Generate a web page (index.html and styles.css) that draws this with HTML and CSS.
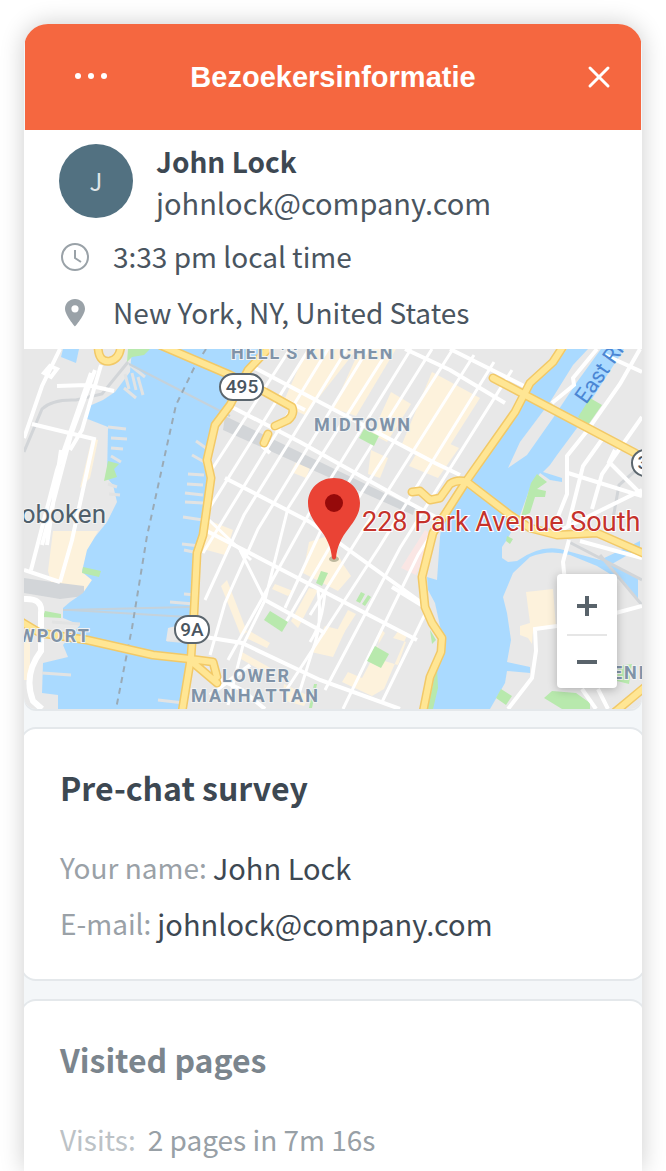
FILE: index.html
```html
<!DOCTYPE html>
<html lang="nl">
  <head>
    <meta charset="utf-8">
    <meta name="viewport" content="width=device-width, initial-scale=1">
    <title>Bezoekersinformatie</title>
    <link rel="stylesheet" href="styles.css">
  </head>
  <body>
    <main class="panel">
      <header class="header">
        <button class="header-button" aria-label="Menu">
          <svg width="36" height="36" viewBox="0 0 36 36" fill="#fff">
            <circle cx="5" cy="17" r="3" /><circle cx="18" cy="17" r="3" /><circle cx="31" cy="17" r="3" />
          </svg>
        </button>
        <h1>Bezoekersinformatie</h1>
        <button class="header-button" aria-label="Sluiten">
          <svg width="36" height="36" viewBox="0 0 36 36" stroke="#fff" stroke-width="3" stroke-linecap="round">
            <path d="M9 9L27 27M27 9L9 27" />
          </svg>
        </button>
      </header>

      <section class="visitor">
        <div class="person">
          <span class="avatar">J</span>
          <div>
            <h2>John Lock</h2>
            <p>johnlock@company.com</p>
          </div>
        </div>
        <p class="detail">
          <svg width="32" height="32" viewBox="0 0 32 32" fill="none" stroke="#9aa2a8" stroke-width="2">
            <circle cx="16" cy="17" r="13" /><path d="M16 10v8l6 4" />
          </svg>
          3:33 pm local time
        </p>
        <p class="detail">
          <svg width="32" height="32" viewBox="0 0 32 32" fill="#9aa2a8">
            <path fill-rule="evenodd" d="M16 3C10.400 3 6 7.300 6 12.800C6 19.500 16 30.500 16 30.500S26 19.500 26 12.800C26 7.300 21.600 3 16 3zM16 9.200a3.600 3.600 0 1 1 0 7.200a3.600 3.600 0 0 1 0-7.200z" />
          </svg>
          New York, NY, United States
        </p>
      </section>

      <section class="map">
        <svg class="map-canvas" viewBox="24 349 618 360" preserveAspectRatio="xMidYMid slice">
          <defs>
            <clipPath id="manhattan">
              <path d="M262 349H562L530 383L467 478L437 530L422 577L432 623L442 640L430 677L423 709H182L194 613L203 535L211 478L207 460L215 425L232 402z" />
            </clipPath>
          </defs>
          <rect x="24" y="349" width="618" height="360" fill="#e8e8e8" />

          <!-- New Jersey side -->
          <g fill="#fdf2dc">
            <path d="M92 438l6 2l-8 38l-10 10z" />
            <path d="M53 531h45l-11 20l-5 20l10 9l-10 14l-30-8l-4-15z" />
            <path d="M24 640h6v40h-6z" />
          </g>
          <path d="M24 578l28 4l32 4v10l-24 3l-36-6z" fill="#d2d5d8" />
          <path d="M24 452l18-43q10-10 34-9l26-6l26-32" fill="none" stroke="#d2d5d8" stroke-width="3" />

          <!-- Hudson -->
          <g fill="#aadaff">
            <path d="M63 349H79L76 363L61 357z" />
            <path d="M132 349H270L240 375L228 402L215 425L203 462L207 478L202 535L197 550L190 630L180 709H58V695L42 693L43 663L68 657L63 645L80 625L63 618V608L70 602L83 593L92 580L82 572L87 550L95 537L107 522L117 502L113 485L107 478L108 427L85 418L87 407L103 400L115 392L130 372z" />
          </g>
          <g fill="#b8e9ad">
            <path d="M128 349h22l-6 6l-12 2l-5 5z" />
            <path d="M108 461l11 3l-5 5l3 8l-13 4z" />
            <path d="M83 567l18 4l-2 6l-17-4z" />
            <path d="M45 611l16 3v4l-18-1z" />
          </g>
          <path d="M108 427l18 2M111 438l16 1M111 448l12 1M111 456l10 6M108 484l9 3M109 494l11 1M130 365l15 12M125 374l4 15M132 373l4 17M138 377l5 18M124 388l12 10M196 441l10 7M192 455l14 8M188 474l16 1M187 484l16 1M185 493l18 2M185 502l18 1M183 517l20 3M182 544l18 2M184 550l14 3M184 594l13 1M170 602l24 2M167 640l23 2M158 700l26 3M42 673l29 2M52 622l28 2" stroke="#e2e3e3" stroke-width="3" fill="none" />
          <path d="M168 628l20-5v16l-22 2z" fill="#e8e8e8" />
          <path d="M129 364L230 416M63 610L190 607M70 610L188 617" stroke="#c5d2db" stroke-width="2" fill="none" />
          <path d="M206 349L194 368L176 405L166 450L147 536L132 628L116 709" fill="none" stroke="#9aaab6" stroke-width="2" stroke-dasharray="6 5" />

          <!-- New Jersey streets -->
          <g fill="none" stroke="#fff" stroke-width="4">
            <path d="M60 349L42 386L24 438M95 370L71 435L42 545M91 373L57 470L31 570M101 365L82 430L70 450M32 424L94 439L72 540L60 582M61 450L47 545M57 386l30-1l27 6M50 366l7 3l-6 8l-7-4zM24 570l36 12" />
            <path d="M24 599q19-1 17 14v38q-18 24-8 50l9 8" stroke-width="6" />
          </g>

          <!-- Manhattan -->
          <g clip-path="url(#manhattan)">
            <g fill="#fdf2dc">
              <path d="M307 349h50l-52 66l-23-10z" />
              <path d="M360 349h36l-40 67l-23-8z" />
              <path d="M391 392l20 12l-24 38l-15-8z" />
              <path d="M432 372l48 26l-42 66l-36-20z" />
              <path d="M428 434l31 14l-21 30l-29-12z" />
              <path d="M371 450l17 8l-8 20l-12-4z" />
              <path d="M296 462l14 6l-4 10l-15-6z" />
              <path d="M208 520l25 10l-8 25l-22-6z" />
              <path d="M309 542l19-6l15 28l8 12l-13 15l-35-18z" />
              <path d="M275 584l18 7l-5 5l-16-7z" />
              <path d="M309 588l-18 33l7 7l20-38z" />
              <path d="M325 626l20 5l-12 26l-22-5z" />
              <path d="M380 628l5 5l-14 24l27 8l8-23l-13-4l6-8l9 3l-24 56l-12 7l-30-14l6-10l14 6l16-30z" />
              <path d="M348 610l8 4l-18 28l-5-4z" />
              <path d="M227 580l20 52l-6 4l-20-50zM248 630l22 13l-3 5l-21-10zM242 652l32 18l-3 6l-30-17z" />
              <path d="M284 684l25 12l-5 10l-22-6z" />
            </g>
            <path d="M425 530l9 5l-18 40l-15-7z" fill="#fae6e4" />
            <path d="M225 416l190 92l-2 7l-190-85z" fill="#d2d5d8" />
            <g fill="#b8e9ad">
              <path d="M321 571l7 2l-6 13l-6-3z" />
              <path d="M361 592l4 2l-5 9l-4-2zM368 595l3 2l-6 9l-3-2z" />
              <path d="M314 684h3l-5 24h-3z" />
            </g>
            <g fill="none" stroke="#fff" stroke-width="3">
              <path d="M290 349L205 480M309 349L197 528M328 349L203 553M347 349L244 515L205 600M368 349L258 529L225 603L210 655M389 349L288 508L265 600M411 349L310 512L228 660M432 349L328 515L285 608M453 349L362 492L286 622M474 355L360 535L310 615M494 362L380 546L283 695M512 370L400 548L325 690M467 478L418 555L343 709M432 600L382 702" />
              <path d="M318 590q5 35-6 62l-14 45M325 590q-2 32-15 52M240 550l25 50l-22 45l-15 60M209 520l42 40" />
            </g>
            <g fill="none" stroke="#fff" stroke-width="4">
              <path d="M255 368L350 418L435 463L460 475M228 405L300 442L400 498L445 522M225 478L310 522L422 603M195 525L265 561L417 640M265 600L325 633M205 637L242 643L320 680L400 709M405 349L450 370L505 403M450 349L528 388M265 390L305 410M392 587L423 606" />
              <path d="M200 670L242 690L265 709M210 695l40-30M262 446l8 7" />
            </g>
            <g fill="#b8e9ad">
              <path d="M364 429l15 7l-5 10l-15-8z" />
              <path d="M270 611l18 11l-6 10l-18-12z" />
              <path d="M375 646l14 8l-8 14l-14-7z" />
            </g>
          </g>

          <!-- East River -->
          <path fill="#aadaff" d="M567 349L557 362L530 382L507 418L467 482L443 515L440 537L437 580L427 577L428 590L435 603L443 640L433 673L432 709H490L505 683L507 671L530 673V667L507 662L511 640L507 613L503 597L513 573L530 557Q549 549 570 555L597 566L625 583L638 600V578L612 564L640 548V541L600 560L560 549Q539 545 517 561L508 562L502 558V547L508 538L520 515L530 488L540 473L550 480L562 482V478L543 472L550 465L557 455L577 428L590 402L624 349z" />
          <path fill="#e8e8e8" d="M508 468L520 442L550 402L573 365L588 349H601L577 382L553 418L527 455z" />
          <g fill="#b8e9ad">
            <path d="M590 398l12 7l-14 20l-10-8z" />
            <path d="M537 474l10 8l-10 7l9 2l-1 6l-10 0l-5 16l-9 4l10-34z" />
            <path d="M507 536l6 3l-3 5l-4-3zM501 689l11 7l-6 9l-10-7z" />
            <path d="M552 691l24 2l14 10v6h-28l-18-11zM618 666l14-2l-3 20l-12-3z" />
            <path d="M430 630l6 10l-4 4zM437 668l1 20l-5 21h-6z" />
          </g>
          <path d="M526 592l27-3l3 38l-23 4l-1 13l-4-6l-8-3v-9l10-3z" fill="#fdf2dc" />
          <path d="M569 542l73 38M600 555l42 50M642 465l-23 20l-8 45" fill="none" stroke="#d2d5d8" stroke-width="3" />

          <!-- Queens and Brooklyn streets -->
          <g fill="none" stroke="#fff" stroke-width="4">
            <path d="M597 349l-24 29l1 7l-22 18M640 349l-20 35l-33 47l-20 25v38l-10 25M605 355l37 17M568 473l74 23M603 438l-20 28l-15 60M642 417l-40 57l-10 35M561 530l81-40M615 450l-6 12l33 33M569 540l-6 22l3 30M642 606l-30 8M557 626l-22 3l1 22l-4 27l-24 31M582 689l14 20M598 689l10 20" />
            <path d="M580 541l62 17" />
          </g>

          <!-- highways -->
          <g fill="none" stroke-linejoin="round" stroke-linecap="round">
            <g stroke="#f2c967" stroke-width="9">
              <path d="M98 345Q98 363 110 361Q120 359 121 345M160 345L230 375L265 392L292 407Q295 414 288 420L275 426M268 434L264 443" />
              <path d="M268 349L248 370L230 405L215 425L207 460L211 478L203 535L197 553L194 613L191 657L182 712" />
              <path d="M20 621L40 633L87 640L153 655L190 659L213 662L217 677M191 661L217 683" />
              <path d="M564 345L553 362L530 383L515 412L467 480L440 522L433 533L422 577L425 607L432 623L442 638L441 652L430 677L423 712" />
              <path d="M493 378L635 453" />
              <path d="M412 492L420 491L430 500L440 498L450 484Q457 479 467 482L510 515L530 528L557 535L597 533L645 554M615 712L645 687" />
            </g>
            <g stroke="#ffe694" stroke-width="6">
              <path d="M98 345Q98 363 110 361Q120 359 121 345M160 345L230 375L265 392L292 407Q295 414 288 420L275 426M268 434L264 443" />
              <path d="M268 349L248 370L230 405L215 425L207 460L211 478L203 535L197 553L194 613L191 657L182 712" />
              <path d="M20 621L40 633L87 640L153 655L190 659L213 662L217 677M191 661L217 683" />
              <path d="M564 345L553 362L530 383L515 412L467 480L440 522L433 533L422 577L425 607L432 623L442 638L441 652L430 677L423 712" />
              <path d="M493 378L635 453" />
              <path d="M412 492L420 491L430 500L440 498L450 484Q457 479 467 482L510 515L530 528L557 535L597 533L645 554M615 712L645 687" />
            </g>
          </g>

          <!-- route shields -->
          <g fill="#fff" stroke="#5b666e" stroke-width="2">
            <rect x="220" y="374" width="43" height="26" rx="13" />
            <rect x="175" y="616" width="34" height="27" rx="13" />
            <circle cx="645" cy="463" r="13" />
          </g>
          <g class="shield-text">
            <text x="242" y="393">495</text>
            <text x="192" y="636">9A</text>
            <text x="643" y="469">3</text>
          </g>

          <g class="district">
            <text x="231" y="359">HELL'S KITCHEN</text>
            <text x="314" y="431">MIDTOWN</text>
            <text x="91" y="642" text-anchor="end">NEWPORT</text>
            <text x="222" y="682">LOWER</text>
            <text x="191" y="702">MANHATTAN</text>
            <text x="572" y="679">GREENPOINT</text>
          </g>
          <text class="city" x="106" y="523" text-anchor="end">Hoboken</text>
          <text class="river" transform="translate(586 405) rotate(-55)">East River</text>

          <!-- visitor's pin -->
          <ellipse cx="334" cy="559" rx="5" ry="3" fill="#7d8062" opacity=".5" />
          <path fill="#ea4335" d="M334 478C319 478 308 489 308 503C308 513 313 520 319 528C327 538 331 547 332 558Q334 561 336 558C337 547 341 538 349 528C355 520 360 513 360 503C360 489 349 478 334 478z" />
          <circle cx="334" cy="503" r="9" fill="#960a0a" />
          <text class="address" x="362" y="531">228 Park Avenue South</text>
        </svg>
        <div class="zoom">
          <button aria-label="Zoom in">
            <svg width="22" height="22" viewBox="0 0 22 22" stroke="#59636b" stroke-width="4"><path d="M1 11H21M11 1V21" /></svg>
          </button>
          <button aria-label="Zoom out">
            <svg width="22" height="22" viewBox="0 0 22 22" stroke="#59636b" stroke-width="4"><path d="M1 11H21" /></svg>
          </button>
        </div>
      </section>

      <section class="card">
        <h2>Pre-chat survey</h2>
        <dl>
          <div><dt>Your name:</dt><dd>John Lock</dd></div>
          <div><dt>E-mail:</dt><dd>johnlock@company.com</dd></div>
        </dl>
      </section>

      <section class="card card-faded">
        <h2>Visited pages</h2>
        <dl>
          <div><dt>Visits:</dt><dd>2 pages in 7m 16s</dd></div>
        </dl>
      </section>
    </main>
  </body>
</html>
```
FILE: styles.css
```css
* {
  box-sizing: border-box;
}

body {
  margin: 0;
  padding: 24px 24px 0;
  background: #fff;
  color: #4a555f;
  font-family: "Noto Sans CJK SC", "Noto Sans", sans-serif;
  font-size: 28px;
  line-height: 40px;
}

h1, h2, p, dl, dd {
  margin: 0;
}

button {
  display: flex;
  align-items: center;
  justify-content: center;
  padding: 0;
  border: 0;
  background: none;
  cursor: pointer;
}

.panel {
  display: flex;
  flex-direction: column;
  min-height: calc(100vh - 24px);
  overflow: hidden;
  border-radius: 24px 24px 0 0;
  background: #f4f7f9;
  box-shadow: 0 0 24px rgba(0, 0, 0, 0.2);
}

.header {
  display: flex;
  align-items: center;
  height: 106px;
  margin: 0 1px;
  padding: 0 24px 0 48px;
  background: #f56740;
  color: #fff;
}

.header h1 {
  flex: 1;
  padding-right: 24px;
  font: bold 29px/40px "Liberation Sans", Arial, sans-serif;
  text-align: center;
}

.header-button {
  width: 36px;
  height: 36px;
}

.visitor {
  padding: 10px 32px 9px 35px;
  background: #fff;
}

.person {
  display: flex;
  gap: 23px;
  margin-bottom: 6px;
}

.person h2 {
  color: #3d4852;
  font-size: 28px;
  font-weight: 700;
  line-height: 42px;
}

.person p {
  font-size: 29px;
}

.avatar {
  display: flex;
  align-items: center;
  justify-content: center;
  width: 74px;
  height: 74px;
  margin-top: 4px;
  border-radius: 50%;
  background: #527181;
  color: #dfe5e8;
  font-size: 24px;
}

.detail {
  display: flex;
  align-items: center;
  gap: 22px;
  height: 56px;
}

.map {
  position: relative;
}

.map-canvas {
  display: block;
  width: 100%;
  height: 360px;
  border-radius: 0 0 12px 12px;
  box-shadow: 0 2px 0 #e4e8eb;
  font-family: Roboto, sans-serif;
}

.shield-text {
  fill: #4a555f;
  font-size: 19px;
  font-weight: 500;
  text-anchor: middle;
}

.district {
  fill: #8093a8;
  stroke: #f2f3f3;
  stroke-width: 2px;
  paint-order: stroke;
  font-size: 18px;
  font-weight: 700;
  letter-spacing: 2px;
}

.city {
  fill: #4f5f6b;
  stroke: #f2f3f3;
  stroke-width: 2px;
  paint-order: stroke;
  font-size: 26px;
}

.river {
  fill: #4a86d4;
  font-size: 22px;
}

.address {
  fill: #c5322b;
  stroke: #fff;
  stroke-width: 2px;
  paint-order: stroke;
  font-size: 27px;
}

.zoom {
  position: absolute;
  right: 25px;
  bottom: 21px;
  width: 60px;
  padding: 4px 10px 0;
  border-radius: 4px;
  background: #fff;
  box-shadow: 0 2px 10px rgba(0, 0, 0, 0.25);
}

.zoom button {
  width: 40px;
  height: 56px;
}

.zoom button + button {
  height: 54px;
  border-top: 2px solid #e6e6e6;
}

.card {
  margin: 18px -4px 0;
  padding: 34px 38px 28px;
  border: 2px solid #e4e8eb;
  border-radius: 16px;
  background: #fff;
}

.card h2 {
  margin-bottom: 28px;
  color: #3d4852;
  font-size: 32px;
  font-weight: 700;
  line-height: 48px;
}

.card dl div {
  display: flex;
  gap: 6px;
  height: 56px;
  align-items: center;
}

.card dt {
  color: #9aa1a7;
}

.card dd {
  color: #3d4852;
  font-size: 29px;
}

.card-faded {
  flex: 1;
  border-bottom: 0;
  border-radius: 16px 16px 0 0;
  padding-bottom: 0;
}

.card-faded h2 {
  color: #7b858d;
}

.card-faded dl div {
  gap: 12px;
}

.card-faded dt {
  color: #bcc2c6;
}

.card-faded dd {
  color: #98a0a6;
  font-size: 28px;
}
```
